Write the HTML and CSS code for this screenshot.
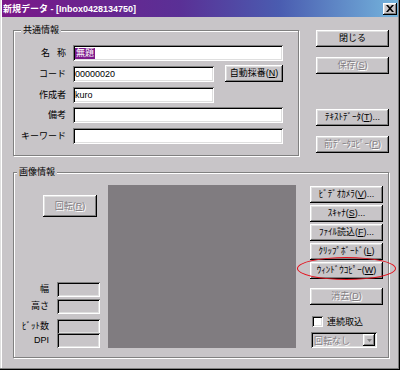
FILE: index.html
```html
<!DOCTYPE html>
<html lang="ja">
<head>
    <meta charset="UTF-8">
    <title>新規データ</title>
    <link rel="stylesheet" href="styles.css">
</head>
<body>
    <div class="window">
        <div class="titlebar">
            <span class="title">新規データ - [Inbox0428134750]</span>
            <span class="close">
                <svg width="8" height="7" viewBox="0 0 8 7"><path d="M0 0h2l2 2.3L6 0h2L5 3.5 8 7H6L4 4.7 2 7H0l3-3.5z" fill="#000"/></svg>
            </span>
        </div>

        <div class="content">
            <div class="top">
                <div class="group group_common">
                    <div class="group_title">共通情報</div>
                    <div class="form">
                        <label class="spaced">名&ensp;&nbsp;称</label>
                        <div class="field wide"><span class="selected">無題</span></div>

                        <label>コード</label>
                        <div class="field_row">
                            <div class="field mid">00000020</div>
                            <div class="btn btn_auto">自動採番(<u>N</u>)</div>
                        </div>

                        <label>作成者</label>
                        <div class="field mid">kuro</div>

                        <label>備考</label>
                        <div class="field wide"></div>

                        <label>キーワード</label>
                        <div class="field wide"></div>
                    </div>
                </div>

                <div class="side">
                    <div class="btn">閉じる</div>
                    <div class="btn disabled gap_small">保存(<u>S</u>)</div>
                    <div class="btn gap_big">ﾃｷｽﾄﾃﾞｰﾀ(<u>T</u>)...</div>
                    <div class="btn disabled gap_small">前ﾃﾞｰﾀｺﾋﾟｰ(<u>P</u>)</div>
                </div>
            </div>

            <div class="group group_image">
                <div class="group_title">画像情報</div>
                <div class="image_row">
                    <div class="image_left">
                        <div class="btn disabled btn_rotate">回転(<u>R</u>)</div>
                        <div class="props">
                            <label>幅</label><div class="field readonly"></div>
                            <label>高さ</label><div class="field readonly"></div>
                            <label class="prop_gap">ﾋﾞｯﾄ数</label><div class="field readonly prop_gap"></div>
                            <label>DPI</label><div class="field readonly"></div>
                        </div>
                    </div>

                    <div class="preview"></div>

                    <div class="image_side">
                        <div class="btn">ﾋﾞﾃﾞｵｶﾒﾗ(<u>V</u>)...</div>
                        <div class="btn">ｽｷｬﾅ(<u>S</u>)...</div>
                        <div class="btn">ﾌｧｲﾙ読込(<u>F</u>)...</div>
                        <div class="btn">ｸﾘｯﾌﾟﾎﾞｰﾄﾞ(<u>L</u>)</div>
                        <div class="btn marked">ｳｨﾝﾄﾞｳｺﾋﾟｰ(<u>W</u>)<span class="circle"></span></div>
                        <div class="btn disabled btn_clear">消去(<u>D</u>)</div>
                        <div class="check_row">
                            <span class="checkbox"></span>
                            <span>連続取込</span>
                        </div>
                        <div class="combo">
                            <span class="combo_text">回転なし</span>
                            <span class="combo_arrow">
                                <svg width="5" height="3" viewBox="0 0 5 3"><path d="M0 0h5L2.5 3z" fill="#808080"/></svg>
                            </span>
                        </div>
                    </div>
                </div>
            </div>
        </div>
    </div>
</body>
</html>
```

FILE: styles.css
```css
*, *:after, *:before {
    box-sizing: border-box;
}

body {
    margin: 0;
    font-family: "Liberation Sans", "Noto Sans CJK JP", sans-serif;
    font-size: 9px;
    color: black;
    background: #c8c5c8;
}

.window {
    width: 400px;
    height: 370px;
    padding: 0 2px;
    background: #c8c5c8;
    box-shadow: inset -1px -1px #000, inset -2px -2px #808080, inset 1px 0 #dfdfdf, inset 2px 0 #fff;
}

.titlebar {
    height: 17px;
    padding-left: 1px;
    padding-right: 1px;
    display: flex;
    align-items: center;
    justify-content: space-between;
    background: linear-gradient(to right, #7a1888 0%, #5a3096 45%, #4a5cb0 70%, #74b4dc 100%);
}

.title {
    color: white;
    font-weight: bold;
    font-size: 9px;
}

.close {
    width: 14px;
    height: 12px;
    display: flex;
    align-items: center;
    justify-content: center;
    background: #c8c5c8;
    box-shadow: inset -1px -1px #000, inset 1px 1px #fff, inset -2px -2px #808080, inset 2px 2px #dfdfdf;
}

.content {
    padding: 13px 0 0 11px;
}

.top {
    display: flex;
    gap: 17px;
}

/* group boxes */
.group {
    border: 1px solid #808080;
    box-shadow: inset 1px 1px #fff, 1px 1px #fff;
}

.group_title {
    width: fit-content;
    height: 14px;
    line-height: 14px;
    margin: -8px 0 0 3px;
    padding: 0 2px;
    background: #c8c5c8;
}

.group_common {
    width: 286px;
    height: 126px;
    padding-left: 4px;
}

.form {
    margin-top: 8px;
    display: grid;
    grid-template-columns: 48px 210px;
    grid-auto-rows: 16px;
    column-gap: 7px;
    row-gap: 4.75px;
}

.form label {
    text-align: right;
    line-height: 16px;
}

.field {
    height: 16px;
    line-height: 14px;
    padding: 1px 2px;
    background: white;
    box-shadow: inset 1px 1px #808080, inset -1px -1px #fff, inset 2px 2px #000, inset -2px -2px #dfdfdf;
}

.field.mid {
    width: 141px;
}

.field_row {
    display: flex;
    align-items: center;
    gap: 11px;
}

.selected {
    display: inline-block;
    line-height: 11px;
    padding: 0 1px;
    color: white;
    background: #7c1a8c;
}

/* buttons */
.btn {
    height: 17px;
    line-height: 17px;
    text-align: center;
    white-space: nowrap;
    background: #c8c5c8;
    box-shadow: inset -1px -1px #000, inset 1px 1px #fff, inset -2px -2px #808080, inset 2px 2px #dfdfdf;
}

.btn.disabled {
    color: #848084;
    text-shadow: 1px 1px 0 #fff;
}

.btn_auto {
    width: 58px;
}

.side {
    width: 73px;
    display: flex;
    flex-direction: column;
}

.gap_small {
    margin-top: 10px;
}

.gap_big {
    margin-top: 35px;
}

/* image section */
.group_image {
    width: 376px;
    height: 186px;
    margin-top: 16px;
}

.image_row {
    margin-top: 6px;
    display: flex;
}

.image_left {
    width: 94px;
    height: 163px;
    display: flex;
    flex-direction: column;
}

.btn_rotate {
    width: 54px;
    height: 22px;
    line-height: 22px;
    margin: 10px 0 0 29px;
}

.props {
    margin-top: auto;
    display: grid;
    grid-template-columns: 35px 43px;
    grid-auto-rows: 15px;
    column-gap: 8px;
    row-gap: 2px;
}

.props label {
    text-align: right;
    line-height: 15px;
}

.props .prop_gap {
    margin-top: 3px;
}

.field.readonly {
    height: 15px;
    background: #c8c5c8;
}

.preview {
    width: 188px;
    height: 163px;
    background: #807c80;
}

.image_side {
    width: 73px;
    margin: 1px 0 0 14px;
    display: flex;
    flex-direction: column;
    gap: 2px;
}

.marked {
    position: relative;
}

.circle {
    position: absolute;
    left: -13px;
    top: -5px;
    width: 99px;
    height: 23px;
    border: 1.5px solid #e4101c;
    border-radius: 50%;
}

.btn_clear {
    margin-top: 7px;
}

.check_row {
    margin: 8px 0 0 2px;
    height: 12px;
    display: flex;
    align-items: center;
    gap: 4px;
}

.checkbox {
    width: 11px;
    height: 11px;
    background: white;
    box-shadow: inset 1px 1px #808080, inset -1px -1px #fff, inset 2px 2px #000, inset -2px -2px #dfdfdf;
}

.combo {
    width: 66px;
    height: 16px;
    margin: 3px 0 0 1px;
    padding: 2px;
    display: flex;
    align-items: center;
    justify-content: space-between;
    background: #c8c5c8;
    box-shadow: inset 1px 1px #808080, inset -1px -1px #fff, inset 2px 2px #000, inset -2px -2px #dfdfdf;
}

.combo_text {
    padding-left: 1px;
    color: #848084;
    text-shadow: 1px 1px 0 #fff;
}

.combo_arrow {
    width: 12px;
    height: 12px;
    display: flex;
    align-items: center;
    justify-content: center;
    box-shadow: inset -1px -1px #000, inset 1px 1px #fff, inset -2px -2px #808080, inset 2px 2px #dfdfdf;
}
```
